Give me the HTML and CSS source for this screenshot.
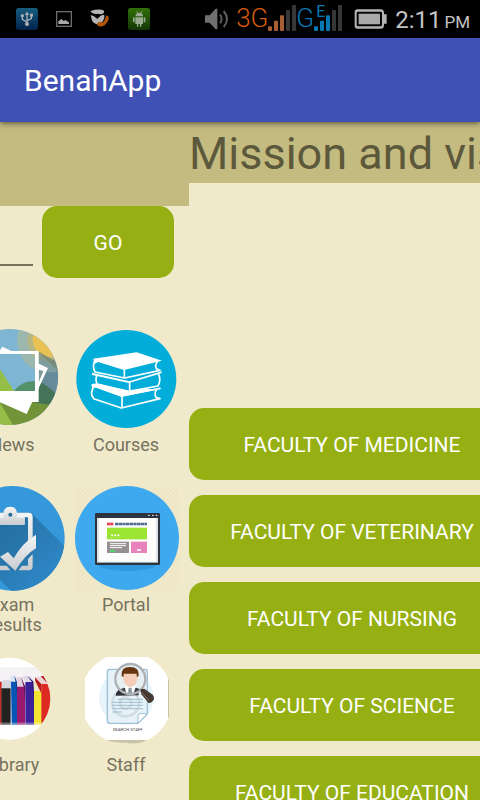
FILE: index.html
```html
<!DOCTYPE html>
<html lang="en">
<head>
<meta charset="utf-8">
<meta name="viewport" content="width=device-width, initial-scale=1">
<title>BenahApp</title>
<link rel="stylesheet" href="styles.css">
</head>
<body>
<div class="status">
  <div class="notices">
    <svg width="22" height="22" viewBox="0 0 66 66" aria-hidden="true">
      <defs>
        <linearGradient id="usb" x2="0" y2="1"><stop stop-color="#165d80"/><stop offset="1" stop-color="#03224c"/></linearGradient>
      </defs>
      <rect width="66" height="66" rx="8" fill="url(#usb)"/>
      <g stroke="#aab0b4" stroke-width="4" fill="none"><path d="M33 16V48M33 42L19 34V24M33 38L46 32V21"/></g>
      <g fill="#aab0b4"><path d="M26 20L33 11L40 20Z"/><circle cx="19" cy="23" r="5"/><rect x="42" y="17" width="9" height="9"/><circle cx="33" cy="48" r="6"/></g>
    </svg>
    <svg width="16" height="16" viewBox="0 0 48 48" aria-hidden="true">
      <rect x="2" y="2" width="44" height="44" fill="none" stroke="#6c6c6c" stroke-width="4"/>
      <path d="M7 39V31L16 24L23 30L28 27L39 34V39Z" fill="#aaa"/>
    </svg>
    <svg width="20" height="20" viewBox="0 0 60 60" aria-hidden="true">
      <path d="M2 6Q28-2 42 5Q44 14 36 15Q30 17 24 14Q12 18 2 8Z" fill="#b5b5b5"/>
      <path d="M2 18Q12 19 22 30Q32 17 43 17V26Q39 42 24 47Q8 44 5 31Z" fill="#b5b5b5"/>
      <path d="M49 19Q61 22 54 36Q43 56 26 52Q18 47 24 40L33 38L36 42Q44 37 45 30Z" fill="#b05608"/>
    </svg>
    <svg width="22" height="22" viewBox="0 0 66 66" aria-hidden="true">
      <defs>
        <linearGradient id="droid" x2="0" y2="1"><stop stop-color="#327108"/><stop offset="1" stop-color="#143607"/></linearGradient>
      </defs>
      <rect width="66" height="66" rx="8" fill="url(#droid)"/>
      <g fill="#9aaa93"><path d="M22 25Q23 14 34 14T45 25Z"/><path d="M22 28H45V48H40V56H36V48H31V56H27V48H22Z"/><rect x="15" y="28" width="5" height="15" rx="2"/><rect x="47" y="28" width="5" height="15" rx="2"/></g>
      <path d="M26 10L29 15M42 10L39 15" stroke="#9aaa93" stroke-width="3"/>
    </svg>
  </div>
  <div class="radio">
    <svg class="volume" width="25" height="22" viewBox="0 0 75 66" aria-hidden="true">
      <path d="M0 22H14L32 2H37V64H32L14 44H0Z" fill="#707070"/>
      <path d="M45 20Q55 33 45 46M56 9Q76 33 56 57" fill="none" stroke="#5c5c5c" stroke-width="6"/>
    </svg>
    <span class="net net-orange">3G</span>
    <svg class="bars" width="28" height="26" viewBox="0 0 84 78" aria-hidden="true">
      <g fill="#a65f35"><rect x="0" y="64" width="12" height="14" rx="3"/><rect x="18" y="47" width="12" height="31" rx="3"/><rect x="36" y="31" width="12" height="47" rx="3"/></g>
      <g fill="#373737"><rect x="54" y="15" width="12" height="63" rx="3"/><rect x="72" y="0" width="12" height="78" rx="3"/></g>
    </svg>
    <span class="net net-blue">G</span>
    <span class="cell">
      <svg class="bars" width="28" height="26" viewBox="0 0 84 78" aria-hidden="true">
        <g fill="#0878b5"><rect x="0" y="64" width="12" height="14" rx="3"/><rect x="18" y="47" width="12" height="31" rx="3"/><rect x="36" y="31" width="12" height="47" rx="3"/></g>
        <g fill="#373737"><rect x="54" y="15" width="12" height="63" rx="3"/><rect x="72" y="0" width="12" height="78" rx="3"/></g>
      </svg>
      <span class="edge">E</span>
    </span>
    <svg class="battery" width="33" height="20" viewBox="0 0 99 60" aria-hidden="true">
      <path d="M10 1H82Q89 1 90 9V16H98V44H90V51Q89 59 82 59H10Q2 59 2 51V9Q2 1 10 1Z" fill="#b4b4b4"/>
      <rect x="8" y="8" width="76" height="44" rx="4" fill="#080808"/>
      <rect x="14" y="14" width="64" height="32" rx="2" fill="#aaa"/>
    </svg>
    <span class="clock">2:11<small>PM</small></span>
  </div>
</div>

<header class="appbar"><h1>BenahApp</h1></header>

<main class="pager">
  <section class="pane home" aria-label="Home">
    <div class="banner"></div>
    <form class="search">
      <input type="text" aria-label="Search">
      <button class="btn go" type="button">GO</button>
    </form>
    <nav class="tiles">
      <a class="tile" href="#news">
        <svg viewBox="-123 18 318 318" aria-hidden="true">
          <defs><clipPath id="newsClip"><circle cx="30" cy="171" r="144"/></clipPath></defs>
          <g clip-path="url(#newsClip)">
            <rect x="-123" y="18" width="318" height="318" fill="#7eb5d3"/>
            <path d="M100 80L180 158V250H100Z" fill="#608ba6"/>
            <circle cx="148" cy="60" r="97" fill="#9cb8ae"/>
            <circle cx="148" cy="60" r="66" fill="#b5b787"/>
            <circle cx="148" cy="60" r="50" fill="#e9c253"/>
            <path d="M112 92L180 160V128L150 115Z" fill="#6d806f" opacity=".8"/>
            <path d="M116 97L180 160V250H116Z" fill="#6a8b92" opacity=".6"/>
            <path d="M35 226Q70 182 107 184Q138 186 180 235V290H35Z" fill="#457357"/>
            <path d="M-115 270Q20 220 90 245L180 260V340H-115Z" fill="#739339"/>
            <path d="M-115 240L0 248L42 320H-115Z" fill="#94be45"/>
            <path d="M7 80L144 144L80 282L-80 212Z" fill="#fff"/>
            <path d="M116 149L130 153L116 188Z" fill="#7d9a98"/>
            <path d="M-80 93H116V246H-80Z" fill="#fff"/>
            <path d="M-80 102H105V213H-80Z" fill="#7eb5d3"/>
            <path d="M61 102Q72 134 105 148V102Z" fill="#9cb8ae"/>
            <path d="M95 102Q99 108 105 112V102Z" fill="#b5b787"/>
            <path d="M42 213Q67 181 105 184V213Z" fill="#549069"/>
            <path d="M-80 213L-5 140L42 213Z" fill="#94be45"/>
          </g>
        </svg>
        <span>News</span>
      </a>
      <a class="tile" href="#courses">
        <svg viewBox="219 18 318 318" aria-hidden="true">
          <ellipse cx="379" cy="177" rx="150" ry="147" fill="#02add9"/>
          <g fill="#02add9" stroke="#fff" stroke-width="5" stroke-linejoin="round" stroke-linecap="round">
            <path d="M284 196Q267 220 281 236L364 264L480 236L469 233Q461 221 470 208"/>
            <path d="M276 196L364 228L480 205M366 228V262"/>
            <path d="M290 168Q285 180 292 193L386 214L474 198Q484 180 476 163"/>
            <path d="M389 186V212"/>
            <path d="M288 118Q274 135 285 156L374 174L480 151L469 146Q464 136 472 125"/>
            <path d="M373 148V172"/>
          </g>
          <g fill="#fff"><path d="M280 116L410 97L486 122L372 150L294 126L283 132Z"/><path d="M276 158L388 184L486 154L484 160L387 189L276 165Z"/><path d="M276 192L292 190L386 214L434 207L480 207L366 230L286 202L276 206Z"/></g>
        </svg>
        <span>Courses</span>
      </a>
      <a class="tile" href="#results">
        <svg viewBox="-123 18 318 318" aria-hidden="true">
          <defs>
            <clipPath id="examClip"><circle cx="37" cy="175" r="157"/></clipPath>
            <linearGradient id="paper" x2="0" y2="1"><stop stop-color="#f5f5f5"/><stop offset="1" stop-color="#c9cccf"/></linearGradient>
            <linearGradient id="cast" x1="0" y1="0" x2="1" y2="1"><stop stop-color="#246b9d"/><stop offset="1" stop-color="#3190d2"/></linearGradient>
          </defs>
          <g clip-path="url(#examClip)">
            <rect x="-123" y="18" width="318" height="318" fill="#3498db"/>
            <path d="M-35 100H94L210 214V350H50L-35 265Z" fill="url(#cast)"/>
            <path d="M-30 98H98V272H-30Z" fill="#246f9f" opacity=".35"/>
            <path d="M-30 98H86Q98 98 98 110V170L84 186V112H74V134H-30ZM98 222V258Q98 271 86 271H55L66 257H84V237ZM-30 257H20L31 271H-30Z" fill="url(#paper)"/>
            <path d="M-10 134V113H10V98Q13 80 31 80T51 98V113H74V134Z" fill="url(#paper)"/>
            <circle cx="31" cy="104" r="6" fill="#286c9c"/>
            <path d="M0 230L24 216L41 235Q67 188 108 164V205Q78 222 46 272Z" fill="url(#paper)"/>
          </g>
        </svg>
        <span>Exam Results</span>
      </a>
      <a class="tile" href="#portal">
        <svg viewBox="219 18 318 318" aria-hidden="true">
          <defs><pattern id="hatch" width="14" height="14" patternUnits="userSpaceOnUse"><path d="M-2 16L16-2" stroke="#dfd4aa" stroke-width="2" opacity=".7"/></pattern></defs>
          <rect x="225" y="22" width="310" height="310" fill="url(#hatch)"/>
          <circle cx="381" cy="174" r="156" fill="#3fa9ef"/>
          <ellipse cx="382" cy="252" rx="88" ry="21" fill="#3099df"/>
          <rect x="285" y="99" width="195" height="156" rx="4" fill="#2d333f"/>
          <rect x="291" y="114" width="183" height="134" fill="#d8e6e9"/>
          <rect x="297" y="114" width="171" height="131" fill="#fff"/>
          <path d="M444 106H449M456 106H461M467 106H472" stroke="#fff" stroke-width="3"/>
          <rect x="321" y="128" width="19" height="8" fill="#ed4055"/>
          <path d="M345 132H441" stroke="#49688f" stroke-width="8" stroke-dasharray="10 1"/>
          <rect x="321" y="143" width="120" height="35" fill="#99e52e"/>
          <path d="M333 167H360M336 162V172M346 162V172M356 162V172" stroke="#fff" stroke-width="3" stroke-dasharray="6 3"/>
          <rect x="321" y="185" width="66" height="34" fill="#928d91"/>
          <path d="M330 191H378M330 197H378M330 203H366" stroke="#fff" stroke-width="3"/>
          <rect x="330" y="210" width="15" height="6" fill="#4fd66c"/>
          <rect x="393" y="185" width="48" height="34" fill="#e87fbd"/>
          <path d="M411 210H423" stroke="#fff" stroke-width="5"/>
          <rect x="297" y="114" width="171" height="131" fill="url(#hatch)" opacity=".4"/>
        </svg>
        <span>Portal</span>
      </a>
      <a class="tile" href="#library">
        <svg viewBox="-123 3 318 318" aria-hidden="true">
          <defs>
            <clipPath id="libClip"><circle cx="28" cy="161" r="123"/></clipPath>
            <linearGradient id="fade" x2="0" y2="1"><stop stop-color="#fff" stop-opacity=".2"/><stop offset="1" stop-color="#fff"/></linearGradient>
          </defs>
          <g clip-path="url(#libClip)">
            <rect x="-123" y="3" width="318" height="318" fill="#fff"/>
            <rect x="-123" y="66" width="318" height="70" fill="#f4f2f5"/>
            <path d="M-80 110H5V240H-80Z" fill="#c62720"/>
            <path d="M5 130L8 106H34V130Z" fill="#d5d5de"/><path d="M4 130H32V240H4Z" fill="#222223"/>
            <path d="M32 110L31 92H48L52 112Z" fill="#dce5ef"/><path d="M33 110H51V240H35Z" fill="#0756b6"/><path d="M43 92L52 112V160L47 112Z" fill="#0a3c85"/>
            <path d="M52 126L49 97H66L76 126Z" fill="#e3d3e0"/><path d="M51 125H75V240H51Z" fill="#98196e"/><path d="M63 97L76 125V170L71 125Z" fill="#661052"/>
            <path d="M76 112L66 93H92L102 112Z" fill="#dedae8"/><path d="M76 111H102V240H76Z" fill="#3b219a"/><path d="M82 93L102 111V160L96 111Z" fill="#25136c"/>
            <path d="M102 139L100 109H111L124 139Z" fill="#eee7c2"/><path d="M102 138H125V240H102Z" fill="#f5e331"/>
            <path d="M124 118L105 97L135 92L160 118Z" fill="#e9d5d5"/><path d="M124 117H160V240H124Z" fill="#dd2b22"/><path d="M105 97L124 117V145L106 109ZM122 94L145 117H151L136 92Z" fill="#b71918"/>
            <rect x="-123" y="232" width="318" height="20" fill="url(#fade)"/>
            <rect x="-123" y="251" width="318" height="40" fill="#fff"/>
          </g>
        </svg>
        <span>Library</span>
      </a>
      <a class="tile" href="#staff">
        <svg viewBox="219 3 318 318" aria-hidden="true">
          <path d="M318 284H442Q410 301 380 293Q340 294 318 284ZM502 98L507 105V214L502 222Z" fill="#c8c2a6"/>
          <path d="M318 36H445Q486 60 504 98V222Q482 265 444 285H318Q276 260 255 221V98Q276 59 318 36Z" fill="#fff"/>
          <circle cx="379" cy="158" r="82" fill="#e8f4fb"/>
          <path d="M330 73H435Q442 73 442 81V206L414 235H330Q322 235 322 227V81Q322 73 330 73Z" fill="#e7f2f8" stroke="#9cc1d5" stroke-width="4"/>
          <path d="M442 206H421Q414 206 414 213V235Z" fill="#fff" stroke="#9cc1d5" stroke-width="3"/>
          <g fill="none" stroke="#cdd8de" stroke-width="8" opacity=".8"><circle cx="377" cy="174" r="40"/><circle cx="377" cy="174" r="17"/></g>
          <path d="M352 163H429M337 172H429M337 181H429M337 191H429M337 201H366" stroke="#9abfd1" stroke-width="3"/>
          <path d="M347 152Q350 130 374 128L390 122L407 128Q416 135 416 151Z" fill="#303038"/>
          <circle cx="391" cy="102" r="45" fill="#e5eff2"/>
          <path d="M359 134Q366 129 374 128H408Q416 130 421 134Q408 146 391 146T359 134Z" fill="#3f4146"/>
          <path d="M374 123H408L401 145H378Z" fill="#fff"/><path d="M386 128H394L397 144L390 151L384 144Z" fill="#8c979d"/>
          <path d="M368 86Q390 75 413 86Q415 120 391 127Q368 121 368 86Z" fill="#f6cdb9"/>
          <path d="M365 94Q361 66 390 66T416 94L410 95V86H371V95Z" fill="#663510"/>
          <circle cx="391" cy="102" r="45" fill="none" stroke="#aeb1b4" stroke-width="7"/>
          <path d="M421 133L433 131L458 149Q465 158 460 166Q453 176 445 173L424 148Z" fill="#453934"/><path d="M424 142L447 166" stroke="#90705e" stroke-width="3"/>
          <text x="338" y="257" font-family="Roboto, sans-serif" font-size="13" fill="#444">SEARCH STAFF</text>
        </svg>
        <span>Staff</span>
      </a>
    </nav>
  </section>

  <section class="pane info">
    <div class="sheet">
      <h2>Mission and vision</h2>
      <div class="faculties">
        <button class="btn" type="button">FACULTY OF MEDICINE</button>
        <button class="btn" type="button">FACULTY OF VETERINARY</button>
        <button class="btn" type="button">FACULTY OF NURSING</button>
        <button class="btn" type="button">FACULTY OF SCIENCE</button>
        <button class="btn" type="button">FACULTY OF EDUCATION</button>
      </div>
    </div>
  </section>
</main>
</body>
</html>
```
FILE: styles.css
```css
* { box-sizing: border-box; }

body {
  margin: 0;
  height: 100vh;
  display: flex;
  flex-direction: column;
  overflow: hidden;
  background: #f1eaca;
  font-family: Roboto, sans-serif;
}

svg { display: block; flex: none; }

.status {
  flex: none;
  height: 38px;
  padding: 0 10px 0 16px;
  display: flex;
  align-items: center;
  justify-content: space-between;
  background: #000;
}

.notices { display: flex; align-items: center; gap: 18px; }

.radio { display: flex; align-items: center; }
.volume { margin-right: 6px; }
.net { font-size: 26px; font-weight: 300; line-height: 36px; padding-bottom: 2px; }
.net-orange { color: #d45a0c; }
.net-blue { color: #0878b5; }
.bars { margin-bottom: 2px; }
.cell { position: relative; }
.edge {
  position: absolute;
  top: -1px;
  left: 2px;
  font-size: 16px;
  line-height: 16px;
  color: #0878b5;
}
.battery { margin: 0 8px 0 12px; }
.clock {
  display: flex;
  align-items: baseline;
  gap: 3px;
  padding-top: 4px;
  color: #c4c4c4;
  font-size: 24px;
  line-height: 34px;
}
.clock small { font-size: 17px; }

.appbar {
  flex: none;
  position: relative;
  height: 84px;
  padding: 0 24px;
  display: flex;
  align-items: center;
  background: #3f51b5;
  box-shadow: 0 1px 6px rgba(0, 0, 0, 0.6);
}
.appbar h1 { margin: 0; font-size: 30px; font-weight: 400; color: #fff; }

.pager { flex: 1; min-height: 0; display: flex; }
.pane { overflow: hidden; }

.home {
  flex: 0 0 189px;
  display: flex;
  flex-direction: column;
  align-items: flex-end;
}
.banner { flex: none; width: 100%; height: 84px; background: #c4bb80; }

.search { flex: none; display: flex; align-items: flex-start; gap: 9px; padding-right: 15px; }
.search input {
  width: 200px;
  height: 60px;
  padding: 0;
  border: 0;
  border-bottom: 2px solid #79725b;
  background: transparent;
  font: inherit;
  font-size: 18px;
}

.btn {
  height: 72px;
  padding: 2px 0 0;
  border: 0;
  border-radius: 15px;
  background: #96b014;
  color: #fff;
  font-family: inherit;
  font-size: 21px;
}
.go { width: 132px; }

.tiles {
  margin: 48px 6px 0 0;
  display: grid;
  grid-template-columns: 114px 114px;
  grid-auto-rows: 160px;
}
.tile {
  display: flex;
  flex-direction: column;
  align-items: center;
  gap: 3px;
  color: #77725f;
  font-size: 18px;
  line-height: 20px;
  text-align: center;
  text-decoration: none;
}
.tile svg { width: 106px; height: 106px; }
.tile span { max-width: 80px; }

.info { flex: 1; }
.sheet { width: 326px; min-width: 100%; }
.sheet h2 {
  margin: 0;
  height: 61px;
  padding-top: 2px;
  background: #c4bb80;
  color: #5c583b;
  font-size: 45px;
  font-weight: 400;
  line-height: 59px;
  white-space: nowrap;
  overflow: hidden;
}
.faculties { margin-top: 225px; display: grid; gap: 15px; }
```
